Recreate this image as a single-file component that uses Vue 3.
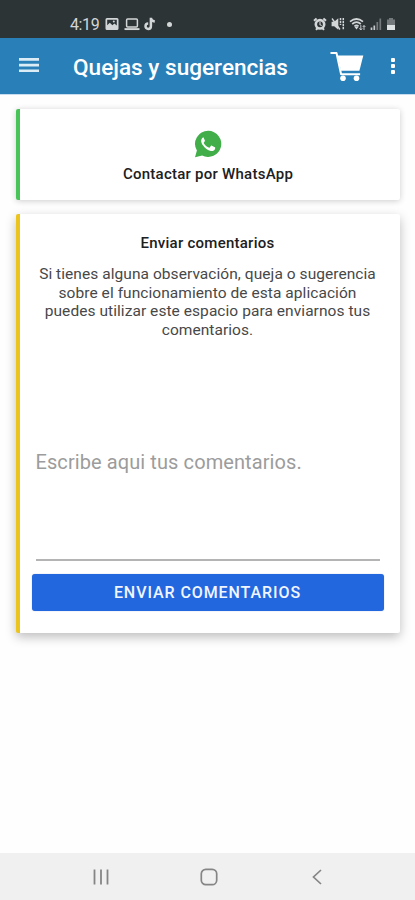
<template>
  <div class="screen">
    <div class="status-bar">
      <div class="status-left">
        <span class="clock">4:19</span>
        <svg class="status-image" viewBox="0 0 14 14" width="14" height="14">
          <path fill="currentColor" fill-rule="evenodd" d="M2 1h10q1.500 0 1.500 1.500v9q0 1.500-1.500 1.500H2Q.5 13 .5 11.500v-9Q.5 1 2 1zM2.200 2.800v5.400l2.600-2.400 2.600 2.500 2-1.800 2.400 2V2.800z" />
          <circle cx="8.800" cy="4.600" r="1" fill="currentColor" />
        </svg>
        <svg class="status-laptop" viewBox="0 0 16 14" width="16" height="14">
          <rect x="2.600" y="1.900" width="10.800" height="8" rx="1" fill="none" stroke="currentColor" stroke-width="1.500" />
          <path d="M.5 12.100h15" stroke="currentColor" stroke-width="1.900" />
        </svg>
        <svg class="status-note" viewBox="0 0 12 14" width="12" height="14">
          <path d="M6.900 .8v8.400a2.700 2.700 0 1 1-2.700-2.700M6.900 1.200q.4 3 3.900 3.300" fill="none" stroke="currentColor" stroke-width="2.500" />
        </svg>
        <i class="status-dot"></i>
      </div>
      <div class="status-right">
        <svg viewBox="0 0 14 14" width="14" height="14">
          <path d="M1 3.800 3.600 1.500M13 3.800l-2.600-2.300M3 12.800l1.600-1.800M11 12.800l-1.600-1.800" stroke="currentColor" stroke-width="2" />
          <circle cx="7" cy="7.300" r="4.200" fill="none" stroke="currentColor" stroke-width="2.600" />
          <path d="M7 5v2.600l1.700 1" fill="none" stroke="currentColor" stroke-width="1.100" />
        </svg>
        <svg viewBox="0 0 14 14" width="14" height="14">
          <path d="M.6 4.800h2.600L7.300 1.300v11.400L3.200 9.200H.6z" fill="currentColor" />
          <path d="M1 1.500l8 11" stroke="currentColor" stroke-width="1.300" />
          <path d="M9.500 1v7M12.300 1v12" stroke="currentColor" stroke-width="1.500" stroke-dasharray="2.200 .8" />
        </svg>
        <svg class="status-wifi" viewBox="0 0 17 14" width="17" height="14">
          <path d="M1 4.600q6.500-5.200 13 0M3.200 7q4.300-3.600 8.600 0M5.500 9.100q2-1.600 4 0" fill="none" stroke="currentColor" stroke-width="1.700" />
          <path d="M7.500 12.400 5.200 9.600h4.600z" fill="currentColor" />
          <path d="M11.800 8v5M10.300 11.300l1.500 1.700 1.400-1.700M15 13V8.500M13.700 10l1.300-1.500 1.400 1.500" fill="none" stroke="currentColor" stroke-width=".9" />
        </svg>
        <svg class="status-signal" viewBox="0 0 12 14" width="12" height="14">
          <path d="M1.500 13v-2.500M4.300 13V8.500" stroke="#c5c9ca" stroke-width="1.700" />
          <path d="M7.300 13V5M10.300 13V1.500" stroke="#747a7c" stroke-width="1.700" />
        </svg>
        <svg class="status-battery" viewBox="0 0 10 14" width="10" height="14">
          <path d="M3 1h4v1.500h2V8H1V2.500h2z" fill="#747a7c" />
          <path d="M1 8h8v5H1z" fill="#dfe2e3" />
        </svg>
      </div>
    </div>

    <header class="app-bar">
      <button class="menu-button" aria-label="Menú">
        <svg viewBox="0 0 20 15" width="20" height="15">
          <path d="M0 1.400h20M0 7.100h20M0 12.800h20" stroke="#dcecf6" stroke-width="2.600" />
        </svg>
      </button>
      <h1>Quejas y sugerencias</h1>
      <button class="cart-button" aria-label="Carrito">
        <svg viewBox="0 0 34 31" width="34" height="31">
          <path d="M.5 2h6l4.600 21.200h19" fill="none" stroke="#fff" stroke-width="2" stroke-linejoin="round" />
          <path d="M7.500 4.500h25.800l-3.900 15.300H11z" fill="#fff" />
          <circle cx="13" cy="27.200" r="2.800" fill="#fff" />
          <circle cx="26.500" cy="27.200" r="2.800" fill="#fff" />
        </svg>
      </button>
      <button class="more-button" aria-label="Más opciones">
        <i></i><i></i><i></i>
      </button>
    </header>

    <main class="content">
      <section class="card whatsapp-card">
        <svg viewBox="0 0 28 28" width="28" height="28">
          <path d="M14.300.8a13.100 13.100 0 1 1-6.200 24.700L1 27.200l1.900-6.700A13.100 13.100 0 0 1 14.300.8z" fill="#41ae4a" />
          <path d="M9.700 7.300c-.5 0-1 .2-1.400.7-2.100 2.300-.9 5.300.8 7.500 2 2.800 4.500 4.700 7.700 5.500 1.800.4 4-.8 4.300-2.300.2-1 .2-1.300-.2-1.500l-3-1.500c-.5-.2-.8-.1-1.100.3l-1.100 1.400c-.3.300-.6.400-1 .2-2.200-.9-3.800-2.400-4.900-4.300-.2-.4-.2-.6.100-.9.500-.6 1.200-1.300 1-1.900l-1.400-2.900q-.1-.3-.5-.3z" fill="#fff" />
        </svg>
        <h2>Contactar por WhatsApp</h2>
      </section>

      <section class="card comment-card">
        <h2>Enviar comentarios</h2>
        <p>
          <span v-for="line in lines" :key="line">{{ line }}</span>
        </p>
        <textarea v-model="comment" placeholder="Escribe aqui tus comentarios."></textarea>
        <button class="send-button">ENVIAR COMENTARIOS</button>
      </section>
    </main>

    <nav class="nav-bar">
      <svg viewBox="0 0 18 18" width="18" height="18">
        <path d="M2.500 1.500v15M9 1.500v15M15.500 1.500v15" stroke="currentColor" stroke-width="1.800" />
      </svg>
      <svg viewBox="0 0 18 18" width="18" height="18">
        <rect x="1.300" y="1.300" width="15.400" height="15.400" rx="4.500" fill="none" stroke="currentColor" stroke-width="1.700" />
      </svg>
      <svg viewBox="0 0 18 18" width="18" height="18">
        <path d="M13 2 5.500 9l7.500 7" fill="none" stroke="currentColor" stroke-width="1.700" />
      </svg>
    </nav>
  </div>
</template>

<script setup>
import { ref } from 'vue'

const comment = ref('')

const lines = [
  'Si tienes alguna observación, queja o sugerencia',
  'sobre el funcionamiento de esta aplicación',
  'puedes utilizar este espacio para enviarnos tus',
  'comentarios.',
]
</script>

<style>
body {
  margin: 0;
  background: #fff;
}
</style>

<style scoped>
.screen {
  display: flex;
  flex-direction: column;
  width: 415px;
  height: 900px;
  overflow: hidden;
  background: #fefefe;
  font-family: Roboto, "Liberation Sans", sans-serif;
}

button {
  padding: 0;
  border: 0;
  background: none;
  font-family: inherit;
}

svg {
  display: block;
  flex: none;
}

.status-bar {
  display: flex;
  justify-content: space-between;
  flex: none;
  box-sizing: border-box;
  height: 38px;
  padding: 17px 19px 0 70px;
  background: #2d3436;
  color: #d3d6d7;
}

.status-left,
.status-right {
  display: flex;
  height: 14px;
  align-items: center;
}

.clock {
  width: 35px;
  padding-top: 2px;
  font-size: 16px;
  line-height: 14px;
  letter-spacing: -0.4px;
}

.status-laptop {
  margin-left: 5px;
}

.status-note {
  margin-left: 4px;
}

.status-dot {
  width: 5px;
  height: 5px;
  margin-left: 11px;
  border-radius: 50%;
  background: currentColor;
}

.status-right {
  gap: 4px;
}

.app-bar {
  display: flex;
  align-items: center;
  flex: none;
  box-sizing: border-box;
  height: 57px;
  padding: 0 20px 0 19px;
  background: #2980b9;
  border-bottom: 1px solid #c5ddee;
}

.menu-button {
  width: 20px;
  margin-top: -1px;
}

h1 {
  flex: 1;
  margin: 4px 0 0 34px;
  color: #fff;
  font-size: 22.600px;
  font-weight: 500;
  line-height: 28px;
  white-space: nowrap;
}

.more-button {
  display: flex;
  flex-direction: column;
  gap: 2px;
  margin-left: 27px;
}

.more-button i {
  width: 4px;
  height: 4px;
  border-radius: 1px;
  background: #fff;
}

.content {
  flex: 1;
  padding: 14px 15px 0 16px;
}

.card {
  display: flex;
  flex-direction: column;
  align-items: center;
  box-sizing: border-box;
  border-radius: 2px;
  background: #fff;
}

.card h2 {
  margin: 0;
  color: #202020;
  font-size: 15px;
  font-weight: 500;
  line-height: 18px;
  letter-spacing: 0.25px;
}

.whatsapp-card {
  height: 91px;
  padding-top: 21px;
  padding-right: 4px;
  border-left: 4px solid #48c358;
  box-shadow: 0 1px 6px rgba(0, 0, 0, 0.2);
}

.whatsapp-card h2 {
  margin-top: 7px;
}

.comment-card {
  height: 419px;
  margin-top: 14px;
  padding: 20px 17px 0 12px;
  border-left: 4px solid #ebc51d;
  box-shadow: 0 4px 11px rgba(0, 0, 0, 0.26);
}

.comment-card p {
  margin: 13px 0 0;
  color: #484848;
  font-size: 15.500px;
  line-height: 18.500px;
  letter-spacing: 0.06px;
  text-align: center;
}

.comment-card p span {
  display: block;
  white-space: nowrap;
}

textarea {
  box-sizing: border-box;
  width: 344px;
  height: 201px;
  margin-top: 21px;
  padding: 90px 0 0;
  border: 0;
  border-bottom: 2px solid #b4b4b4;
  border-radius: 0;
  outline: none;
  background: transparent;
  color: #333;
  font-family: inherit;
  font-size: 20px;
  line-height: 24px;
  letter-spacing: 0.09px;
  resize: none;
}

textarea::placeholder {
  color: #9c9c9c;
}

.send-button {
  width: 352px;
  height: 37px;
  margin-top: 13px;
  border-radius: 3px;
  background: #2367df;
  box-shadow: 0 0 1px rgba(20, 70, 170, 0.5);
  color: #f0f5ff;
  font-size: 16px;
  font-weight: 500;
  letter-spacing: 0.920px;
}

.nav-bar {
  display: flex;
  justify-content: space-between;
  flex: none;
  box-sizing: border-box;
  height: 47px;
  padding: 15px 89px 0 92px;
  background: #f0f0f0;
  color: #858585;
}
</style>
